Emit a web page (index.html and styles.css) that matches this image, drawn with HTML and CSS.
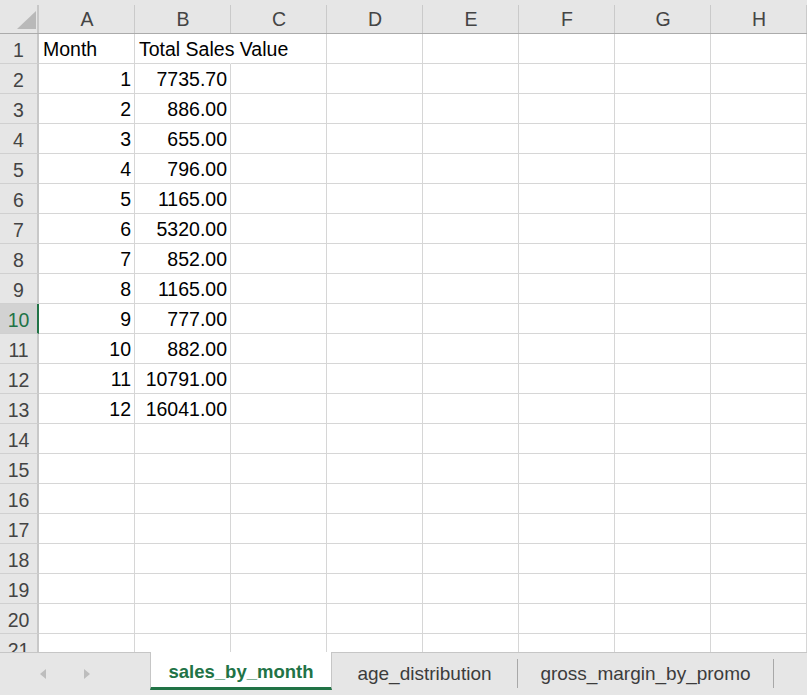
FILE: index.html
```html
<!DOCTYPE html>
<html>
<head>
<meta charset="utf-8">
<title>sales_by_month</title>
<link rel="stylesheet" href="styles.css">
</head>
<body>
<div class="sheet">
  <div class="grid">
    <div class="corner"><span class="tri"></span></div>
    <div class="ch">A</div><div class="ch">B</div><div class="ch">C</div><div class="ch">D</div><div class="ch">E</div><div class="ch">F</div><div class="ch">G</div><div class="ch">H</div>

    <div class="rh">1</div><div class="c">Month</div><div class="c ov">Total Sales Value</div><div class="c"></div><div class="c"></div><div class="c"></div><div class="c"></div><div class="c"></div><div class="c"></div>
    <div class="rh">2</div><div class="c n">1</div><div class="c n">7735.70</div><div class="c"></div><div class="c"></div><div class="c"></div><div class="c"></div><div class="c"></div><div class="c"></div>
    <div class="rh">3</div><div class="c n">2</div><div class="c n">886.00</div><div class="c"></div><div class="c"></div><div class="c"></div><div class="c"></div><div class="c"></div><div class="c"></div>
    <div class="rh">4</div><div class="c n">3</div><div class="c n">655.00</div><div class="c"></div><div class="c"></div><div class="c"></div><div class="c"></div><div class="c"></div><div class="c"></div>
    <div class="rh">5</div><div class="c n">4</div><div class="c n">796.00</div><div class="c"></div><div class="c"></div><div class="c"></div><div class="c"></div><div class="c"></div><div class="c"></div>
    <div class="rh">6</div><div class="c n">5</div><div class="c n">1165.00</div><div class="c"></div><div class="c"></div><div class="c"></div><div class="c"></div><div class="c"></div><div class="c"></div>
    <div class="rh">7</div><div class="c n">6</div><div class="c n">5320.00</div><div class="c"></div><div class="c"></div><div class="c"></div><div class="c"></div><div class="c"></div><div class="c"></div>
    <div class="rh">8</div><div class="c n">7</div><div class="c n">852.00</div><div class="c"></div><div class="c"></div><div class="c"></div><div class="c"></div><div class="c"></div><div class="c"></div>
    <div class="rh">9</div><div class="c n">8</div><div class="c n">1165.00</div><div class="c"></div><div class="c"></div><div class="c"></div><div class="c"></div><div class="c"></div><div class="c"></div>
    <div class="rh sel">10</div><div class="c n">9</div><div class="c n">777.00</div><div class="c"></div><div class="c"></div><div class="c"></div><div class="c"></div><div class="c"></div><div class="c"></div>
    <div class="rh">11</div><div class="c n">10</div><div class="c n">882.00</div><div class="c"></div><div class="c"></div><div class="c"></div><div class="c"></div><div class="c"></div><div class="c"></div>
    <div class="rh">12</div><div class="c n">11</div><div class="c n">10791.00</div><div class="c"></div><div class="c"></div><div class="c"></div><div class="c"></div><div class="c"></div><div class="c"></div>
    <div class="rh">13</div><div class="c n">12</div><div class="c n">16041.00</div><div class="c"></div><div class="c"></div><div class="c"></div><div class="c"></div><div class="c"></div><div class="c"></div>
    <div class="rh">14</div><div class="c"></div><div class="c"></div><div class="c"></div><div class="c"></div><div class="c"></div><div class="c"></div><div class="c"></div><div class="c"></div>
    <div class="rh">15</div><div class="c"></div><div class="c"></div><div class="c"></div><div class="c"></div><div class="c"></div><div class="c"></div><div class="c"></div><div class="c"></div>
    <div class="rh">16</div><div class="c"></div><div class="c"></div><div class="c"></div><div class="c"></div><div class="c"></div><div class="c"></div><div class="c"></div><div class="c"></div>
    <div class="rh">17</div><div class="c"></div><div class="c"></div><div class="c"></div><div class="c"></div><div class="c"></div><div class="c"></div><div class="c"></div><div class="c"></div>
    <div class="rh">18</div><div class="c"></div><div class="c"></div><div class="c"></div><div class="c"></div><div class="c"></div><div class="c"></div><div class="c"></div><div class="c"></div>
    <div class="rh">19</div><div class="c"></div><div class="c"></div><div class="c"></div><div class="c"></div><div class="c"></div><div class="c"></div><div class="c"></div><div class="c"></div>
    <div class="rh">20</div><div class="c"></div><div class="c"></div><div class="c"></div><div class="c"></div><div class="c"></div><div class="c"></div><div class="c"></div><div class="c"></div>
    <div class="rh">21</div><div class="c"></div><div class="c"></div><div class="c"></div><div class="c"></div><div class="c"></div><div class="c"></div><div class="c"></div><div class="c"></div>
  </div>
</div>
<div class="tabbar">
  <div class="nav"><span class="arrow left"></span><span class="arrow right"></span></div>
  <div class="tab active">sales_by_month</div>
  <div class="tab t2">age_distribution</div>
  <div class="sep"></div>
  <div class="tab t3">gross_margin_by_promo</div>
  <div class="sep"></div>
</div>
</body>
</html>
```
FILE: styles.css
```css
* { box-sizing: border-box; }

html, body {
  margin: 0;
  padding: 0;
}

body {
  width: 807px;
  height: 695px;
  overflow: hidden;
  background: #e6e6e6;
  font-family: "Liberation Sans", Arial, sans-serif;
}

.sheet {
  height: 652px;
  overflow: hidden;
  background: #ffffff;
}

.grid {
  display: grid;
  grid-template-columns: 39px repeat(8, 96px);
  grid-template-rows: 34px;
  grid-auto-rows: 30px;
}

.corner {
  display: flex;
  align-items: flex-end;
  justify-content: flex-end;
  padding: 0 3px 4px 0;
  border-bottom: 1px solid #ababab;
  background:
    linear-gradient(#c8c8c8, #c8c8c8) right 5px / 2px calc(100% - 5px) no-repeat,
    #e6e6e6;
}

.tri {
  width: 0;
  height: 0;
  border-left: 19px solid transparent;
  border-bottom: 18px solid #b9b9b9;
}

.ch {
  display: flex;
  align-items: center;
  justify-content: center;
  padding-top: 5px;
  font-size: 19.5px;
  color: #444444;
  border-bottom: 1px solid #ababab;
  background:
    linear-gradient(#cacaca, #cacaca) right 5px / 1px calc(100% - 5px) no-repeat,
    #e6e6e6;
}

.rh {
  display: flex;
  align-items: center;
  justify-content: center;
  padding-top: 3px;
  font-size: 19.5px;
  color: #444444;
  background: #e6e6e6;
  border-right: 2px solid #c8c8c8;
  border-bottom: 1px solid #d0d0d0;
}

.rh.sel {
  background: #d2d2d2;
  color: #217346;
  border-right-color: #217346;
}

.c {
  padding: 2px 4px 0;
  line-height: 27px;
  font-size: 19.5px;
  color: #000000;
  white-space: nowrap;
  border-right: 1px solid #d6d6d6;
  border-bottom: 1px solid #d6d6d6;
}

.c.n {
  text-align: right;
  padding-right: 3px;
}

.c.ov {
  border-right-color: transparent;
}

.tabbar {
  height: 43px;
  display: flex;
  align-items: flex-start;
  border-top: 1px solid #c6c6c6;
  background: #e6e6e6;
}

.nav {
  width: 150px;
  height: 36px;
  display: flex;
  align-items: center;
  gap: 38px;
  padding: 6px 0 0 40px;
}

.arrow {
  width: 0;
  height: 0;
  border-top: 5.5px solid transparent;
  border-bottom: 5.5px solid transparent;
}

.arrow.left {
  border-right: 6px solid #bdbdbd;
}

.arrow.right {
  border-left: 6px solid #bdbdbd;
}

.tab {
  height: 36px;
  display: flex;
  align-items: center;
  justify-content: center;
  padding-top: 5px;
  font-size: 19px;
  color: #3c3c3c;
  white-space: nowrap;
}

.tab.active {
  width: 182px;
  height: 38px;
  margin-top: -1px;
  padding-top: 5px;
  background: #ffffff;
  border-left: 1px solid #c6c6c6;
  border-right: 1px solid #c6c6c6;
  border-bottom: 3px solid #217346;
  font-size: 18.5px;
  font-weight: bold;
  color: #217346;
}

.tab.t2 { width: 185px; }
.tab.t3 { width: 255px; }

.sep {
  width: 1px;
  height: 29px;
  margin-top: 6px;
  background: #a8a8a8;
}
```
